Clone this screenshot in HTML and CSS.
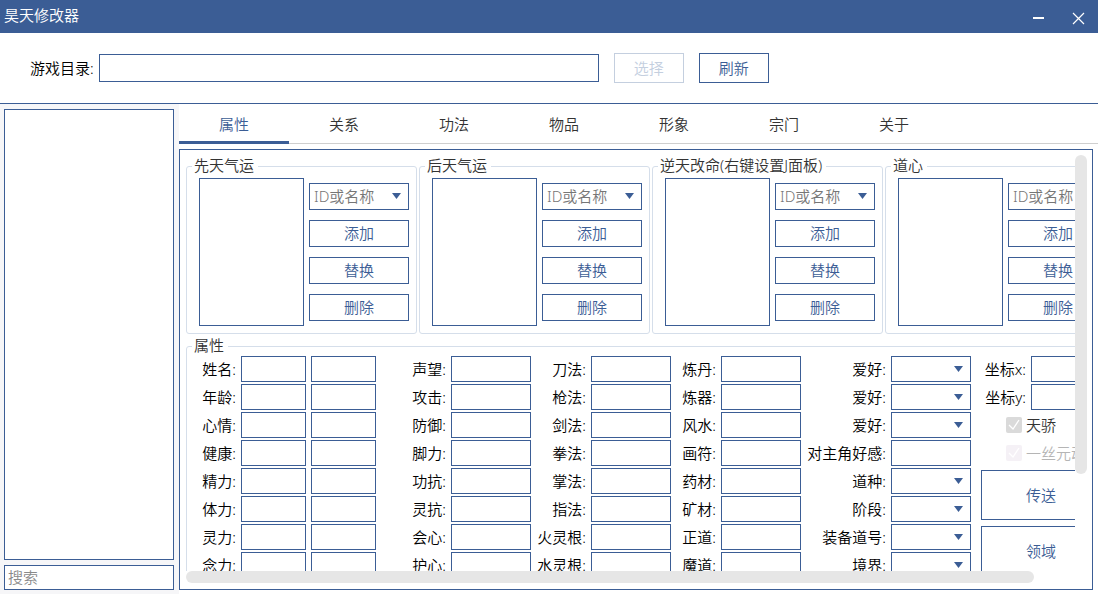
FILE: index.html
```html
<!DOCTYPE html>
<html lang="zh-CN">
<head>
  <meta charset="UTF-8" />
  <meta name="viewport" content="width=device-width, initial-scale=1.0"/>
  <title>昊天修改器</title>
  <link rel="stylesheet" href="styles.css">
</head>
<body>
  <header class="titlebar">
    <h1>昊天修改器</h1>
    <div class="window-buttons">
      <button type="button" aria-label="最小化">
        <svg width="14" height="14" viewBox="0 0 14 14"><path d="M2 6h11v2H2z" fill="#fff"/></svg>
      </button>
      <button type="button" aria-label="关闭">
        <svg width="14" height="14" viewBox="0 0 14 14"><path d="M2 2l11 11M13 2L2 13" stroke="#fff" stroke-width="1.2" fill="none"/></svg>
      </button>
    </div>
  </header>

  <div class="toolbar">
    <label for="path">游戏目录:</label>
    <input type="text" id="path" class="path" />
    <button type="button" class="btn" disabled>选择</button>
    <button type="button" class="btn">刷新</button>
  </div>

  <div class="content">
    <aside class="sidebar">
      <div class="list"></div>
      <input type="text" class="search" placeholder="搜索" aria-label="搜索" />
    </aside>

    <main class="main">
      <nav class="tabs">
        <button type="button" class="tab active">属性</button>
        <button type="button" class="tab">关系</button>
        <button type="button" class="tab">功法</button>
        <button type="button" class="tab">物品</button>
        <button type="button" class="tab">形象</button>
        <button type="button" class="tab">宗门</button>
        <button type="button" class="tab">关于</button>
      </nav>

      <section class="panel">
        <div class="view">
          <div class="groups">
            <fieldset class="group">
              <legend>先天气运</legend>
              <div class="group-body">
                <div class="list"></div>
                <div class="actions">
                  <select class="hint" aria-label="先天气运"><option>ID或名称</option></select>
                  <button type="button" class="btn">添加</button>
                  <button type="button" class="btn">替换</button>
                  <button type="button" class="btn">删除</button>
                </div>
              </div>
            </fieldset>
            <fieldset class="group">
              <legend>后天气运</legend>
              <div class="group-body">
                <div class="list"></div>
                <div class="actions">
                  <select class="hint" aria-label="后天气运"><option>ID或名称</option></select>
                  <button type="button" class="btn">添加</button>
                  <button type="button" class="btn">替换</button>
                  <button type="button" class="btn">删除</button>
                </div>
              </div>
            </fieldset>
            <fieldset class="group">
              <legend>逆天改命(右键设置J面板)</legend>
              <div class="group-body">
                <div class="list"></div>
                <div class="actions">
                  <select class="hint" aria-label="逆天改命"><option>ID或名称</option></select>
                  <button type="button" class="btn">添加</button>
                  <button type="button" class="btn">替换</button>
                  <button type="button" class="btn">删除</button>
                </div>
              </div>
            </fieldset>
            <fieldset class="group">
              <legend>道心</legend>
              <div class="group-body">
                <div class="list"></div>
                <div class="actions">
                  <select class="hint" aria-label="道心"><option>ID或名称</option></select>
                  <button type="button" class="btn">添加</button>
                  <button type="button" class="btn">替换</button>
                  <button type="button" class="btn">删除</button>
                </div>
              </div>
            </fieldset>
          </div>

          <fieldset class="attrs">
            <legend>属性</legend>
            <div class="columns">
              <div class="col col-pair">
                <div class="field"><label for="name">姓名:</label><input type="text" id="name" /><input type="text" aria-label="姓名 2" /></div>
                <div class="field"><label for="age">年龄:</label><input type="text" id="age" /><input type="text" aria-label="年龄 2" /></div>
                <div class="field"><label for="mood">心情:</label><input type="text" id="mood" /><input type="text" aria-label="心情 2" /></div>
                <div class="field"><label for="health">健康:</label><input type="text" id="health" /><input type="text" aria-label="健康 2" /></div>
                <div class="field"><label for="energy">精力:</label><input type="text" id="energy" /><input type="text" aria-label="精力 2" /></div>
                <div class="field"><label for="hp">体力:</label><input type="text" id="hp" /><input type="text" aria-label="体力 2" /></div>
                <div class="field"><label for="mp">灵力:</label><input type="text" id="mp" /><input type="text" aria-label="灵力 2" /></div>
                <div class="field"><label for="sp">念力:</label><input type="text" id="sp" /><input type="text" aria-label="念力 2" /></div>
              </div>

              <div class="col col-battle">
                <label class="field">声望:<input type="text" /></label>
                <label class="field">攻击:<input type="text" /></label>
                <label class="field">防御:<input type="text" /></label>
                <label class="field">脚力:<input type="text" /></label>
                <label class="field">功抗:<input type="text" /></label>
                <label class="field">灵抗:<input type="text" /></label>
                <label class="field">会心:<input type="text" /></label>
                <label class="field">护心:<input type="text" /></label>
              </div>

              <div class="col col-skill">
                <label class="field">刀法:<input type="text" /></label>
                <label class="field">枪法:<input type="text" /></label>
                <label class="field">剑法:<input type="text" /></label>
                <label class="field">拳法:<input type="text" /></label>
                <label class="field">掌法:<input type="text" /></label>
                <label class="field">指法:<input type="text" /></label>
                <label class="field">火灵根:<input type="text" /></label>
                <label class="field">水灵根:<input type="text" /></label>
              </div>

              <div class="col col-craft">
                <label class="field">炼丹:<input type="text" /></label>
                <label class="field">炼器:<input type="text" /></label>
                <label class="field">风水:<input type="text" /></label>
                <label class="field">画符:<input type="text" /></label>
                <label class="field">药材:<input type="text" /></label>
                <label class="field">矿材:<input type="text" /></label>
                <label class="field">正道:<input type="text" /></label>
                <label class="field">魔道:<input type="text" /></label>
              </div>

              <div class="col col-social">
                <label class="field">爱好:<select></select></label>
                <label class="field">爱好:<select></select></label>
                <label class="field">爱好:<select></select></label>
                <label class="field">对主角好感:<input type="text" /></label>
                <label class="field">道种:<select></select></label>
                <label class="field">阶段:<select></select></label>
                <label class="field">装备道号:<select></select></label>
                <label class="field">境界:<select></select></label>
              </div>

              <div class="col col-extra">
                <label class="field">坐标x:<input type="text" /></label>
                <label class="field">坐标y:<input type="text" /></label>
                <label class="check"><input type="checkbox" checked />天骄</label>
                <label class="check disabled"><input type="checkbox" checked disabled />一丝元动</label>
                <button type="button" class="btn big">传送</button>
                <button type="button" class="btn big">领域</button>
              </div>
            </div>
          </fieldset>
        </div>
        <div class="track-y"><div class="thumb"></div></div>
        <div class="track-x"><div class="thumb"></div></div>
      </section>
    </main>
  </div>
</body>
</html>
```

FILE: styles.css
```css
:root {
  --primary: #3b5d95;
  --line: #d5deea;
  --thumb: #e6e6e6;
}

* {
  margin: 0;
  padding: 0;
  box-sizing: border-box;
}

body {
  font-family: "Noto Sans", "Noto Sans CJK SC", sans-serif;
  font-size: 15px;
  font-weight: 350;
  line-height: 20px;
  color: #000;
  background: #fff;
  height: 100vh;
  display: flex;
  flex-direction: column;
  overflow: hidden;
}

input,
select,
button {
  font: inherit;
  color: inherit;
  outline: none;
  border-radius: 0;
}

input[type="text"],
select {
  border: 1px solid var(--primary);
  background-color: #fff;
  height: 26px;
  min-width: 0;
  padding: 0 3px;
}

select {
  appearance: none;
  background-image: url("data:image/svg+xml,%3Csvg xmlns='http://www.w3.org/2000/svg' width='9' height='6'%3E%3Cpath d='M0 0h9L4.5 6z' fill='%233b5d95'/%3E%3C/svg%3E");
  background-repeat: no-repeat;
  background-position: right 7px top 9px;
}

.btn {
  border: 1px solid var(--primary);
  background: #fff;
  color: var(--primary);
}

.btn:disabled {
  border-color: #c4cfdf;
  color: #c4cfdf;
}

.list {
  border: 1px solid var(--primary);
  background: #fff;
}

/* title bar */
.titlebar {
  flex: none;
  height: 33px;
  background: var(--primary);
  color: #fff;
  display: flex;
  justify-content: space-between;
  padding-left: 4px;
}

.titlebar h1 {
  font-size: 15px;
  font-weight: inherit;
  line-height: 30px;
}

.window-buttons {
  display: flex;
}

.window-buttons button {
  width: 40px;
  padding-top: 3px;
  border: none;
  background: none;
  display: flex;
  align-items: center;
  justify-content: center;
}

/* directory bar */
.toolbar {
  flex: none;
  height: 71px;
  padding-left: 30px;
  border-bottom: 1px solid var(--primary);
  display: flex;
  align-items: center;
}

.toolbar .path {
  width: 500px;
  height: 28px;
  margin-left: 5px;
}

.toolbar .btn {
  width: 70px;
  height: 30px;
  margin-left: 15px;
}

.content {
  flex: 1;
  min-height: 0;
  display: flex;
}

.sidebar {
  flex: none;
  width: 179px;
  padding: 5px 5px 4px 4px;
  background: #f6f6f8;
  display: flex;
  flex-direction: column;
  gap: 5px;
}

.sidebar .list {
  flex: 1;
}

.sidebar .search {
  height: 25px;
  padding-bottom: 2px;
}

.search::placeholder {
  color: #8a8a8a;
}

.main {
  flex: 1;
  min-width: 0;
  display: flex;
  flex-direction: column;
}

.tabs {
  flex: none;
  height: 40px;
  display: flex;
  box-shadow: inset 0 -1px #cfcfcf;
}

.tab {
  width: 110px;
  border: none;
  border-bottom: 3px solid transparent;
  padding-top: 2px;
  background: none;
  color: #333;
}

.tab.active {
  color: var(--primary);
  border-color: var(--primary);
}

/* scrolling panel */
.panel {
  flex: 1;
  min-height: 0;
  margin: 5px 5px 4px 0;
  padding: 5px 5px 6px 6px;
  border: 1px solid var(--primary);
  display: grid;
  grid-template-columns: minmax(0, 1fr) 12px;
  grid-template-rows: minmax(0, 1fr) 12px;
}

.view {
  overflow: hidden;
  padding-top: 1px;
}

.thumb {
  background: var(--thumb);
  border-radius: 6px;
}

.track-y .thumb {
  height: 319px;
}

.track-x .thumb {
  width: 848px;
  height: 12px;
}

fieldset {
  border: 1px solid var(--line);
  border-radius: 3px;
  padding: 0 5px;
  min-width: 0;
}

legend {
  height: 20px;
  line-height: 18px;
  padding: 0 4px 0 2px;
  color: #333;
}

.groups {
  display: flex;
  gap: 2px;
}

.group {
  flex: none;
  width: 231px;
}

.group-body {
  display: flex;
  gap: 5px;
  padding: 2px 2px 7px 7px;
}

.group-body .list {
  width: 105px;
  height: 148px;
}

.actions {
  flex: none;
  width: 100px;
  padding-top: 5px;
  display: flex;
  flex-direction: column;
  gap: 10px;
}

.actions .btn,
.actions select {
  height: 27px;
  padding-bottom: 2px;
}

.actions .hint {
  padding-left: 4px;
  color: #767676;
}

.attrs {
  width: 930px;
  margin-top: 2px;
}

.columns {
  display: flex;
}

.col {
  flex: none;
  display: flex;
  flex-direction: column;
  gap: 2px;
}

.field {
  display: flex;
  justify-content: flex-end;
  align-items: center;
  gap: 5px;
  white-space: nowrap;
}

.field input,
.field select {
  width: 80px;
}

.col-pair {
  width: 184px;
}

.col-pair input {
  width: 65px;
}

.col-battle {
  width: 155px;
}

.col-skill,
.col-extra {
  width: 140px;
}

.col-craft {
  width: 130px;
}

.col-social {
  width: 170px;
}

.check {
  display: flex;
  align-items: center;
  gap: 4px;
  height: 26px;
  padding-left: 35px;
  color: #333;
  white-space: nowrap;
}

.check input {
  appearance: none;
  flex: none;
  width: 16px;
  height: 16px;
  border-radius: 2px;
  background: #dadada url("data:image/svg+xml,%3Csvg xmlns='http://www.w3.org/2000/svg' width='16' height='16'%3E%3Cpath d='M3 8l4 4 6-9' fill='none' stroke='%23fff' stroke-width='1.3'/%3E%3C/svg%3E");
}

.check.disabled {
  color: #b5b5b5;
}

.check.disabled input {
  background-color: #f5f1f6;
}

.big {
  flex: none;
  width: 120px;
  height: 50px;
  margin: 2px 0 2px 10px;
}
```
